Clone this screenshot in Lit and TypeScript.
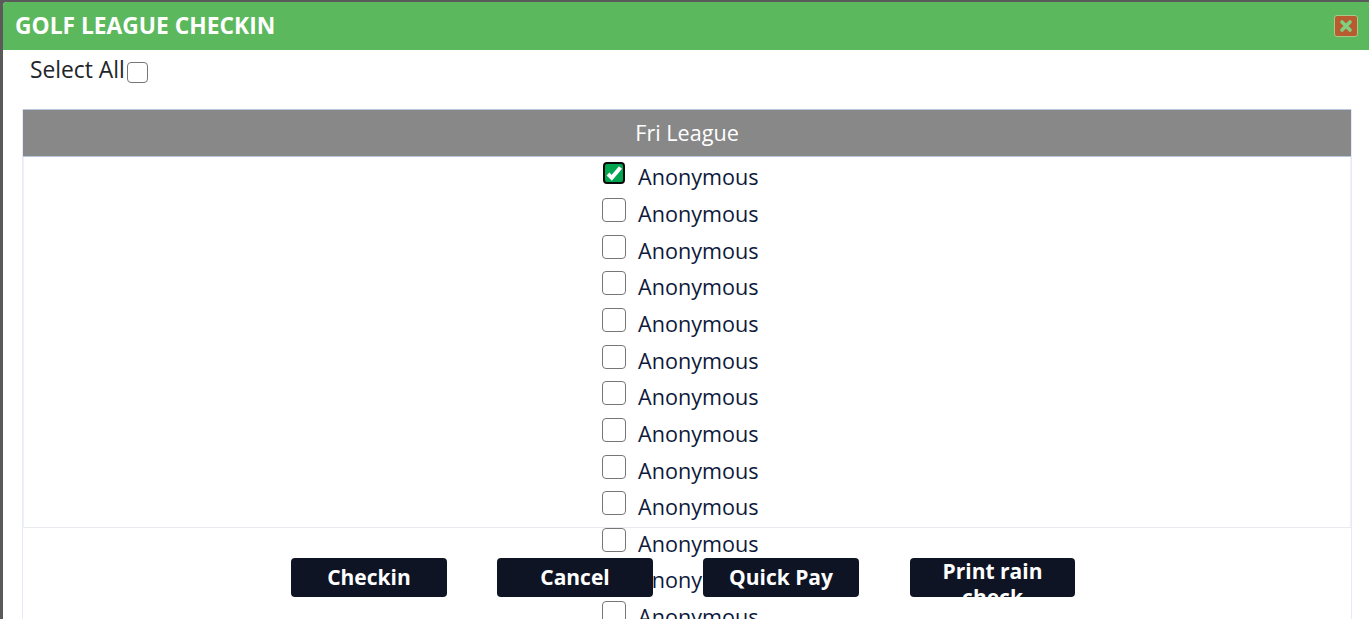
import { LitElement, html, css } from 'lit';
import { customElement } from 'lit/decorators.js';

const PLAYERS = Array.from({ length: 13 }, (_, i) => ({ name: 'Anonymous', checked: i === 0 }));
const ACTIONS = ['Checkin', 'Cancel', 'Quick Pay', 'Print rain check'];

@customElement('app-root')
export class AppRoot extends LitElement {
  static styles = css`
    :host {
      display: block;
      height: 619px;
      overflow: hidden;
      background: #5a5a5a;
      font-family: 'Open Sans', sans-serif;
      color: #0e1a3c;
    }
    .modal {
      height: 617px;
      margin: 2px 0 0 3px;
      background: #fff;
      border-top-left-radius: 4px;
      overflow: hidden;
    }
    .title-bar {
      height: 48px;
      padding: 0 11px 2px 12px;
      box-sizing: border-box;
      display: flex;
      align-items: center;
      justify-content: space-between;
      background: #5cb85c;
    }
    .title {
      font-size: 22.8px;
      font-weight: 700;
      color: #fff;
    }
    .close {
      width: 24px;
      height: 22px;
      margin-top: 2px;
      padding: 0;
      display: flex;
      align-items: center;
      justify-content: center;
      background: #b85c30;
      border: 1px solid #a9c98c;
      border-radius: 3px;
    }
    .select-all {
      height: 59px;
      padding-left: 27px;
      display: flex;
      align-items: flex-start;
      font-size: 22.8px;
      line-height: 39px;
      color: #212529;
    }
    .select-all input {
      width: 21px;
      height: 21px;
      margin: 12px 0 0 2px;
    }
    input {
      appearance: none;
      flex: none;
      box-sizing: border-box;
      background: #fff;
      border: 1px solid #767676;
      border-radius: 4px;
    }
    .panel {
      margin: 0 17px 0 19px;
      border: 1px solid #e6ebf7;
    }
    .panel-head {
      height: 48px;
      padding-bottom: 2px;
      box-sizing: border-box;
      display: flex;
      align-items: center;
      justify-content: center;
      background: #888;
      border: 1px solid #b9c8e0;
      border-width: 1px 0;
      margin: -1px 0 0;
      font-size: 21.6px;
      color: #fff;
    }
    .panel-body {
      height: 370px;
      padding-top: 2.4px;
      box-sizing: border-box;
      border: 1px solid #eef1fa;
      border-width: 0 1px;
    }
    .row {
      height: 36.65px;
      padding-left: 578px;
      display: flex;
      align-items: flex-start;
      gap: 12px;
    }
    .row input {
      width: 24px;
      height: 24px;
      margin: 2px 0 0;
    }
    .row input:checked {
      width: 22px;
      height: 22px;
      margin: 3px 1px 0;
      background: #00a64f;
      border: 2px solid #0a0a0a;
    }
    .check {
      position: absolute;
      width: 24px;
      height: 24px;
      margin-top: 2px;
      pointer-events: none;
    }
    .name {
      font-size: 21.6px;
      line-height: 36px;
    }
    .panel-foot {
      height: 100px;
      padding: 30px 0 0 268px;
      display: flex;
      align-items: flex-start;
      gap: 50px;
      border-top: 1px solid #e8eaf0;
      box-sizing: border-box;
    }
    button.action {
      position: relative;
      width: 156px;
      height: 39px;
      padding: 0 20px 2px;
      overflow: hidden;
      background: #0e1424;
      border: 0;
      border-radius: 4px;
      font-family: inherit;
      font-size: 21px;
      font-weight: 700;
      line-height: 26px;
      color: #fff;
    }
    button.wide {
      width: 165px;
      margin-left: 1px;
    }
  `;

  render() {
    return html`
      <div class="modal">
        <div class="title-bar">
          <span class="title">GOLF LEAGUE CHECKIN</span>
          <button class="close" aria-label="Close">
            <svg width="14" height="14" viewBox="0 0 14 14">
              <path d="M3 3l8 8M11 3l-8 8" stroke="#7fd07f" stroke-width="3.6" stroke-linecap="round" />
            </svg>
          </button>
        </div>
        <label class="select-all">Select All<input type="checkbox" /></label>
        <div class="panel">
          <div class="panel-head">Fri League</div>
          <div class="panel-body">
            ${PLAYERS.map(
              (p) => html`
                <div class="row">
                  <input type="checkbox" .checked=${p.checked} />
                  ${p.checked
                    ? html`<svg class="check" viewBox="0 0 24 24">
                        <path d="M6 13l3.8 3.8L18.5 6.5" fill="none" stroke="#fff" stroke-width="4" />
                      </svg>`
                    : ''}
                  <span class="name">${p.name}</span>
                </div>
              `
            )}
          </div>
          <div class="panel-foot">
            ${ACTIONS.map(
              (a) => html`<button class="action ${a.startsWith('Print') ? 'wide' : ''}">${a}</button>`
            )}
          </div>
        </div>
      </div>
    `;
  }
}
